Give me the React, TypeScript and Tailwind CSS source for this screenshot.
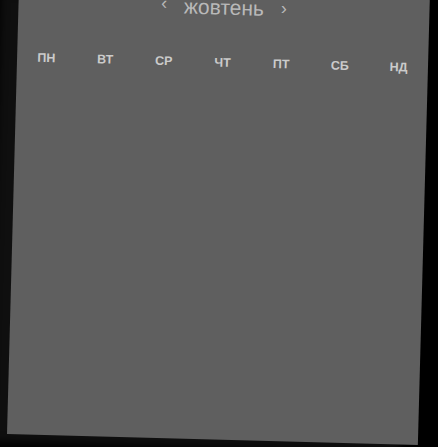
import React from "react";

const days = ["ПН", "ВТ", "СР", "ЧТ", "ПТ", "СБ", "НД"];

export default function App() {
  return (
    <div className="w-[438px] h-[447px] overflow-hidden bg-black">
      <div
        className="mt-[-16px] ml-[6.5px] w-[411px] h-[450px] bg-[#5f5f5f] origin-bottom-left rotate-[1.535deg] shadow-[-18px_8px_8px_0px_#0f0f0f]"
        style={{ fontFamily: '"Liberation Sans", Arial, sans-serif' }}
      >
        <div className="h-[32px] pt-[4px] flex items-center justify-center text-[#b9b9b9]">
          <span className="text-[18px] leading-none mr-[17px] -mt-[6px]">‹</span>
          <span className="text-[21px] leading-[28px]">жовтень</span>
          <span className="text-[18px] leading-none ml-[17px] -mt-[3px]">›</span>
        </div>
        <div className="mt-[33px] grid grid-cols-7 text-[12.5px] leading-[16px] font-bold text-[#cbcbcb]">
          {days.map((d) => (
            <div key={d} className="text-center">
              {d}
            </div>
          ))}
        </div>
      </div>
    </div>
  );
}
